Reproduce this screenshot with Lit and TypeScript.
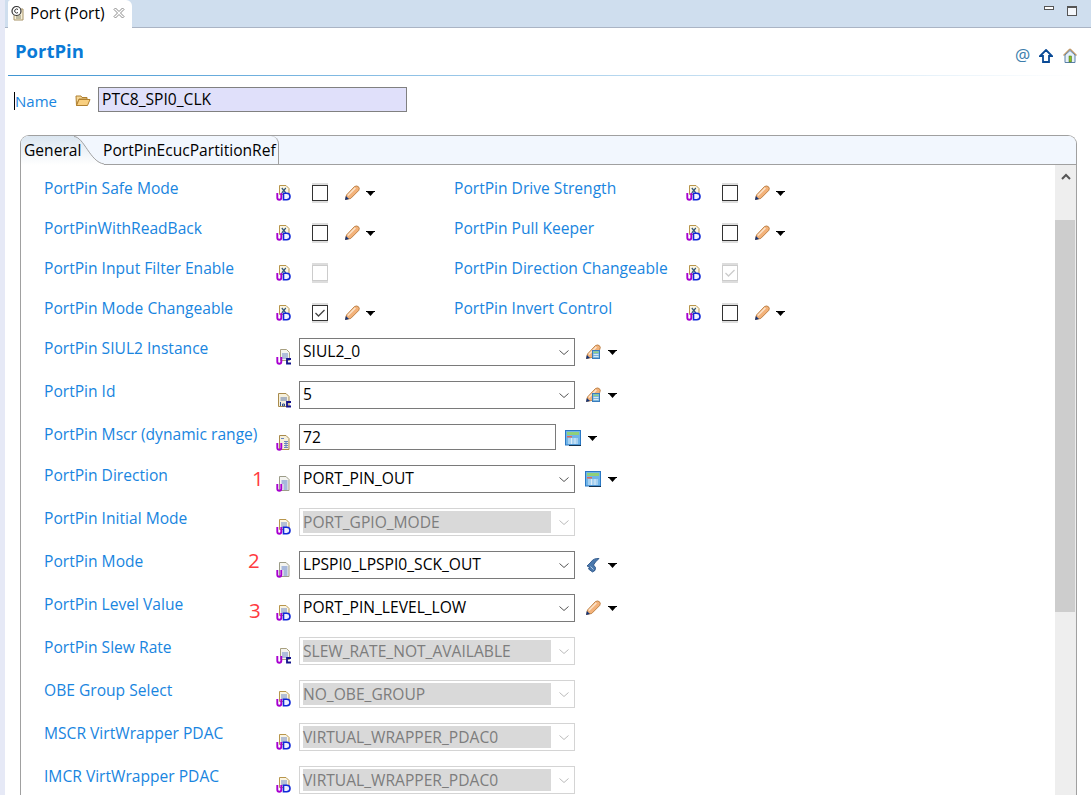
import { LitElement, html, css, svg } from "lit";
import { customElement } from "lit/decorators.js";

const U = svg`<path d="M1.300 8v4.800a2 2 0 0 0 4 0V8" fill="none" stroke="#a800d0" stroke-width="1.900"/>`;
const D = svg`<path d="M7.500 8.300v6.400h3.200a3.300 3.200 0 0 0 0-6.400z" fill="#eef1ff" stroke="#1028d8" stroke-width="1.600"/>`;
const C = svg`<path d="M15 10h-4v4.500h4" fill="none" stroke="#12128c" stroke-width="1.800"/>`;
const X = svg`<path d="M5.800 3l4 4.800M9.800 3l-4 4.800" stroke="#2f5578" stroke-width="1.200"/>`;
const page = svg`<path d="M3.500 .5h6.500l3 3v7h-9.500z" fill="#fbf5e2" stroke="#b8964c"/><path d="M5 4h6M5 6h6M5 8h6" stroke="#6c88c8"/>`;

const typeIcons: Record<string, unknown> = {
  xud: svg`<path d="M3.500 .5h6.500l3 3v6h-9.500z" fill="#fbf5e2" stroke="#b8964c"/>${X}${U}${D}`,
  uc: svg`<path d="M4.500 .5h6l3 3v8h-9z" fill="#f4f4ee" stroke="#a8a080"/><path d="M6 5h6M6 7h6M6 9h6" stroke="#6c88c8"/>${U}${C}`,
  ac: svg`<path d="M2.500 1.500h7.500l3 3v10h-10.500z" fill="#f6f0dc" stroke="#a98b4c"/><path d="M4.500 6h6.500M4.500 8h6.500" stroke="#5a74a8"/><path d="M4.500 10v4M6.500 12h2v2h-2z" fill="none" stroke="#30508c"/>${C}`,
  ut: svg`<path d="M3.500 .5h6.500l3 3v11h-9.500z" fill="#f6f0dc" stroke="#a98b4c"/><path d="M8 6.500h4M8 8.500h4M8 10.500h4M8 12.500h4M10 6v7" stroke="#6a84c0"/><path d="M5 3.500h3" stroke="#6a84c0"/>${U}`,
  u: svg`<path d="M3.500 .5h6.500l3 3v11h-9.500z" fill="#f4f4f0" stroke="#9c9c88"/><path d="M5.500 5h6M5.500 7h6M7.500 9h4M7.500 11h4M7.500 13h4" stroke="#5a7cc8"/>${U}`,
  ud: svg`${page}${U}${D}`,
};
const typeIcon = (k: string) => html`<svg class="ticon" viewBox="0 0 16 16" width="16" height="16">${typeIcons[k]}</svg>`;

const pencilBody = svg`<path d="M1.500 14.500l1-4.500L10.500 1.500q2.500-1.200 4 .3t.2 3.700l-8 8z" fill="#f3b27a" stroke="#b8793c" stroke-width=".9"/><path d="M3.800 10.500l7.600-7.600" stroke="#fbe2c8" stroke-width="1.600"/><path d="M1 15l.9-4 3.100 3z" fill="#12357a"/>`;
const pencil = () => html`<svg class="aicon" viewBox="0 0 16 16" width="16" height="16">${pencilBody}</svg>`;
const calcBody = svg`<rect x=".5" y=".5" width="15" height="14.500" fill="#6fb4e8" stroke="#2a78c4"/><rect x="2" y="2" width="12" height="3" fill="#8fd07a"/><rect x="2" y="6" width="5" height="1.500" fill="#e06a5a"/><path d="M3 9h10M3 11h10M3 13h10M6.500 8v6M10 8v6" stroke="#dcecf8"/><path d="M4 15.500h12" stroke="#14324e"/>`;
const calc = () => html`<svg class="aicon" viewBox="0 0 16 16" width="16" height="16">${calcBody}</svg>`;
const pencilCalc = () => html`<svg class="aicon" viewBox="0 0 16 16" width="16" height="16">${pencilBody}<rect x="7.500" y="6.500" width="7" height="8" fill="#7cb6dc" stroke="#3a7cbc"/><rect x="8.500" y="7.500" width="5" height="1.500" fill="#90d080"/><path d="M8.500 10.500h5M8.500 12.500h5" stroke="#d8e8f4"/></svg>`;
const hook = () => html`<svg class="aicon" viewBox="0 0 16 16" width="16" height="16"><path d="M14 1.500q-5.500-.5-8 3.500L2 9l2.500 1-1 2 4 3q3.500-1 3-4.500L8.500 8q1.500-3 5.500-6.500z" fill="#4a78ac" stroke="#1f4a80" stroke-width=".8"/><path d="M5.500 9.500l3 3" stroke="#b4cce4"/></svg>`;
const arrow = () => html`<svg class="drop" viewBox="0 0 9 5" width="9" height="5"><path d="M0 0h9v1H8L4.500 5 1 1H0z" fill="#000"/></svg>`;
const chevron = () => html`<svg class="chev" viewBox="0 0 10 5" width="10" height="5"><path d="M.5 .5l4.500 4 4.500-4" fill="none" stroke="currentColor"/></svg>`;

type Row = { label: string; icon: string; checked?: boolean; disabled?: boolean; tools?: boolean };
type One = { label: string; icon: string; value: string; kind: "combo" | "text" | "off"; action?: () => unknown; mark?: string };

const pairs: Row[][] = [
  [{ label: "PortPin Safe Mode", icon: "xud", tools: true }, { label: "PortPin Drive Strength", icon: "xud", tools: true }],
  [{ label: "PortPinWithReadBack", icon: "xud", tools: true }, { label: "PortPin Pull Keeper", icon: "xud", tools: true }],
  [{ label: "PortPin Input Filter Enable", icon: "xud", disabled: true }, { label: "PortPin Direction Changeable", icon: "xud", disabled: true, checked: true }],
  [{ label: "PortPin Mode Changeable", icon: "xud", checked: true, tools: true }, { label: "PortPin Invert Control", icon: "xud", tools: true }],
];
const singles: One[] = [
  { label: "PortPin SIUL2 Instance", icon: "uc", value: "SIUL2_0", kind: "combo", action: pencilCalc },
  { label: "PortPin Id", icon: "ac", value: "5", kind: "combo", action: pencilCalc },
  { label: "PortPin Mscr (dynamic range)", icon: "ut", value: "72", kind: "text", action: calc },
  { label: "PortPin Direction", icon: "u", value: "PORT_PIN_OUT", kind: "combo", action: calc, mark: "1" },
  { label: "PortPin Initial Mode", icon: "ud", value: "PORT_GPIO_MODE", kind: "off" },
  { label: "PortPin Mode", icon: "u", value: "LPSPI0_LPSPI0_SCK_OUT", kind: "combo", action: hook, mark: "2" },
  { label: "PortPin Level Value", icon: "ud", value: "PORT_PIN_LEVEL_LOW", kind: "combo", action: pencil, mark: "3" },
  { label: "PortPin Slew Rate", icon: "uc", value: "SLEW_RATE_NOT_AVAILABLE", kind: "off" },
  { label: "OBE Group Select", icon: "ud", value: "NO_OBE_GROUP", kind: "off" },
  { label: "MSCR VirtWrapper PDAC", icon: "ud", value: "VIRTUAL_WRAPPER_PDAC0", kind: "off" },
  { label: "IMCR VirtWrapper PDAC", icon: "ud", value: "VIRTUAL_WRAPPER_PDAC0", kind: "off" },
];

@customElement("app-root")
export class AppRoot extends LitElement {
  static styles = css`
    :host { display: block; width: 1091px; height: 795px; overflow: hidden; background: #fff;
      font-family: "Open Sans", "Noto Sans", sans-serif; font-size: 15.600px; color: #000; }
    * { box-sizing: border-box; }
    .root { display: flex; height: 795px; }
    .side { width: 5px; flex: none; background: #e6e9f6; }
    .main { flex: 1; min-width: 0; display: flex; flex-direction: column; }
    .bar { height: 28px; flex: none; display: flex; justify-content: space-between; background: #cfdeee;
      border-bottom: 1px solid #aab4c4; padding-left: 3px; }
    .tab { width: 124px; height: 28px; background: #fff; border-radius: 3px 6px 0 0; display: flex; align-items: center;
      gap: 4px; padding: 0 0 3px 2px; white-space: nowrap; }
    .close { margin-left: 4px; flex: none; }
    .winbtns { display: flex; gap: 13px; padding: 6px 14px 0 0; }
    .min { width: 10px; height: 4px; border: 1px solid #555; background: #fff; }
    .max { width: 10px; height: 10px; border: 1px solid #555; border-top-width: 2px; background: #f4f7fb; }
    .head { height: 48px; flex: none; display: flex; justify-content: space-between; align-items: center;
      margin: 0 14px 0 3px; padding: 0 0 0 7px;
      border-bottom: 1px solid; border-image: linear-gradient(90deg, #3f95d2 0%, #a9d0ec 50%, #fff 100%) 1; }
    .title { font-size: 18.500px; font-weight: 700; color: #0a7ad6; position: relative; top: -1px; }
    .hicons { display: flex; align-items: center; gap: 10px; padding: 8px 0 0 0; }
    .at { color: #3b7dab; font-size: 17px; line-height: 16px; width: 14px; text-align: center; position: relative; top: -1px; }
    .name { display: flex; align-items: center; height: 25px; margin: 11px 0 0 9px; }
    .name label { width: 61px; color: #1985e0; position: relative; top: 1px; font-size: 15px; }
    .name label span { border-left: 1px solid #000; display: inline-block; line-height: 18px; }
    .name svg { margin-right: 7px; flex: none; }
    .nfield { width: 309px; height: 25px; background: #e0e0fa; border: 1px solid #808080; padding: 0 3px; line-height: 23px; }
    .folder { margin: 23px 14px 0 15px; flex: 1; min-height: 0; border: 1px solid #a0a0a0; border-bottom: 0; border-radius: 9px 9px 0 0;
      overflow: hidden; display: flex; flex-direction: column; }
    .strip { height: 29px; flex: none; display: flex; background: #f2f7fe; border-bottom: 1px solid #a0a0a0; }
    .tgen { width: 51px; margin-bottom: -1px; background: linear-gradient(#dbe6f0, #fff); padding: 0 0 0 3px; line-height: 28px; white-space: nowrap; position: relative; z-index: 1; }
    .curve { flex: none; margin-bottom: -1px; display: block; }
    .tref { width: 176px; margin-left: -1px; border-right: 1px solid #a0a0a0; border-radius: 0 8px 0 0; line-height: 28px; white-space: nowrap; }
    .content { flex: 1; display: flex; min-height: 0; }
    .form { flex: 1; min-width: 0; padding: 8px 0 0 23px; }
    .pair { display: grid; grid-template-columns: 410px 410px; height: 40px; }
    .cell { display: flex; align-items: flex-start; }
    .lab { width: 232px; flex: none; color: #1985e0; line-height: 20px; margin-top: 5px; white-space: nowrap; position: relative; }
    .ticon { flex: none; }
    .cell > .ticon { margin-top: 12px; }
    .check { width: 16px; height: 16px; margin: 12px 16px 0 20px; border: 1px solid #333; background: #fff; box-shadow: 0 -2px 0 #ddd, 0 2px 0 #ddd; flex: none; }
    .check.off { border-color: #ccc; }
    .check svg { display: block; }
    .aicon { flex: none; display: block; }
    .tools { display: flex; align-items: center; gap: 6px; margin-top: 12px; }
    .one { display: flex; height: 43px; align-items: flex-start; }
    .one.short { height: 41px; }
    .one > .ticon { margin-top: 16px; }
    .mark { position: absolute; font-size: 20.500px; color: #ff3b3f; line-height: 24px; }
    .mark.m1 { left: 208px; top: 1px; }
    .mark.m2 { left: 204px; top: -3px; }
    .mark.m3 { left: 205px; top: 4px; }
    .field { margin: 5px 0 0 7px; width: 276px; height: 28px; border: 1px solid #7a7a7a; display: flex; align-items: center;
      padding: 0 5px 0 3px; justify-content: space-between; white-space: nowrap; flex: none; }
    .field > span { position: relative; top: -1px; }
    .field.text { width: 257px; height: 26px; line-height: 22px; }
    .chev { color: #555; flex: none; }
    .field.off { border-color: #d4d4d4; color: #7d7d7d; }
    .field.off .chev { color: #bbb; }
    .field.off span { width: 248px; height: 22px; line-height: 22px; background: #d9d9d9; top: 0; }
    .after { display: flex; align-items: center; gap: 7px; margin: 11px 0 0 10px; }
    .after.t { margin: 11px 0 0 9px; }
    .scroll { width: 21px; flex: none; background: #eee; display: flex; flex-direction: column; align-items: center; }
    .up { height: 55px; width: 100%; display: flex; justify-content: center; padding-top: 8px; }
    .thumb { width: 20px; height: 392px; background: #cdcdcd; align-self: flex-start; }
  `;

  private chk(r: Row) {
    const stroke = r.disabled ? "#ccc" : "#444";
    return html`<div class="check ${r.disabled ? "off" : ""}">${r.checked
      ? html`<svg viewBox="0 0 14 14" width="14" height="14"><path d="M2.500 7l3 3 6-6" fill="none" stroke=${stroke} stroke-width="1.300"/></svg>`
      : ""}</div>`;
  }

  render() {
    return html`<div class="root">
      <div class="side"></div>
      <div class="main">
        <div class="bar">
          <div class="tab">
            <svg viewBox="0 0 16 16" width="16" height="16"><path d="M4 4h9v11H4z" fill="#f6efd8" stroke="#a89468"/><path d="M6 11h5M6 13h5" stroke="#8a8a70"/><circle cx="6.500" cy="6" r="4.500" fill="#fff" stroke="#333" stroke-width="1.200"/><path d="M8 4.500a2 2 0 1 0 0 3" fill="none" stroke="#333"/></svg>
            <span>Port (Port)</span>
            <svg class="close" viewBox="0 0 12 12" width="12" height="12"><path d="M1 2.500L2.500 1 6 4.500 9.500 1 11 2.500 7.500 6 11 9.500 9.500 11 6 7.500 2.500 11 1 9.500 4.500 6z" fill="#fff" stroke="#8a8a8a"/></svg>
          </div>
          <div class="winbtns"><div class="min"></div><div class="max"></div></div>
        </div>
        <div class="head">
          <div class="title">PortPin</div>
          <div class="hicons">
            <span class="at">@</span>
            <svg viewBox="0 0 14 14" width="14" height="14"><path d="M7 1l6 6h-3v6H4V7H1z" fill="#fff" stroke="#0a4a96" stroke-width="1.800"/></svg>
            <svg viewBox="0 0 14 15" width="14" height="15"><path d="M7 1L.5 7.500M7 1l6.500 6.500" stroke="#c09a6c" stroke-width="1.500"/><path d="M2 7v7.500h10V7L7 2.500z" fill="#e6f0f8" stroke="#5a80a8"/><rect x="6" y="8" width="2.500" height="6" fill="#8cc020" stroke="#3a6a20" stroke-width=".5"/></svg>
          </div>
        </div>
        <div class="name">
          <label><span>Name</span></label>
          <svg viewBox="0 0 16 14" width="16" height="14"><path d="M1 3h5l1 1.500h5V6H4L1.500 12.500z" fill="#f6d898" stroke="#b08030"/><path d="M4 6.500h11L12.500 12.500H1.500z" fill="#f8cf80" stroke="#b08030"/></svg>
          <div class="nfield">PTC8_SPI0_CLK</div>
        </div>
        <div class="folder">
          <div class="strip">
            <div class="tgen">General</div>
            <svg class="curve" viewBox="0 0 32 29" width="32" height="29">
              <defs><linearGradient id="g" x1="0" y1="0" x2="0" y2="1"><stop offset="0" stop-color="#dbe6f0"/><stop offset="1" stop-color="#fff"/></linearGradient></defs>
              <path d="M0 0H2C12 1 18 26 32 28V29H0z" fill="url(#g)"/>
              <path d="M2 .5C12 1 18 26 32 28" fill="none" stroke="#a0a0a0"/>
            </svg>
            <div class="tref">PortPinEcucPartitionRef</div>
          </div>
          <div class="content">
            <div class="form">
              ${pairs.map((p) => html`<div class="pair">${p.map((r) => html`<div class="cell">
                <div class="lab">${r.label}</div>
                ${typeIcon(r.icon)}
                ${this.chk(r)}
                ${r.tools ? html`<div class="tools">${pencil()}${arrow()}</div>` : ""}
              </div>`)}</div>`)}
              ${singles.map((s) => html`<div class="one ${s.kind === "text" ? "short" : ""}">
                <div class="lab">${s.label}${s.mark ? html`<span class="mark m${s.mark}">${s.mark}</span>` : ""}</div>
                ${typeIcon(s.icon)}
                ${s.kind === "text"
                  ? html`<div class="field text">${s.value}</div>`
                  : html`<div class="field ${s.kind}"><span>${s.value}</span>${chevron()}</div>`}
                ${s.action ? html`<div class="after ${s.kind === "text" ? "t" : ""}">${s.action()}${arrow()}</div>` : ""}
              </div>`)}
            </div>
            <div class="scroll">
              <div class="up"><svg viewBox="0 0 10 7" width="10" height="7"><path d="M1 6l4-4 4 4" fill="none" stroke="#555" stroke-width="2"/></svg></div>
              <div class="thumb"></div>
            </div>
          </div>
        </div>
      </div>
    </div>`;
  }
}
